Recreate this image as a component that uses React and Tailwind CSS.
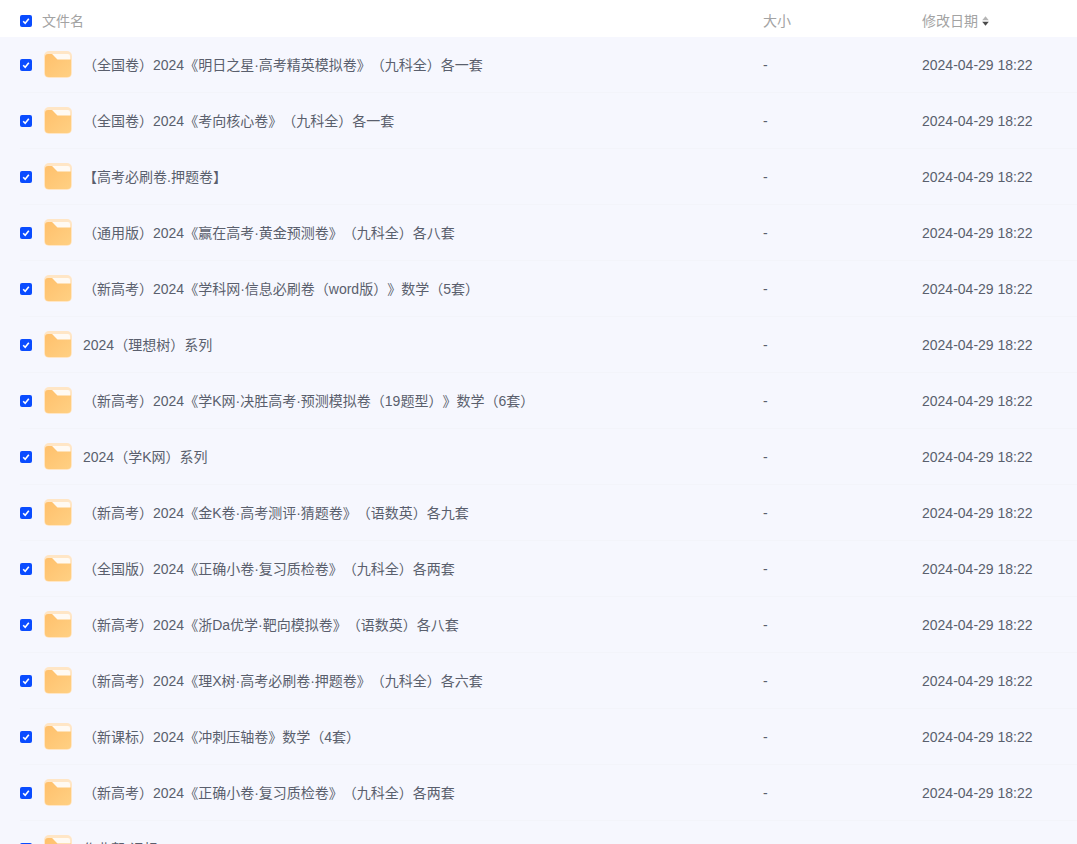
const ROWS = [
  '（全国卷）2024《明日之星·高考精英模拟卷》（九科全）各一套',
  '（全国卷）2024《考向核心卷》（九科全）各一套',
  '【高考必刷卷.押题卷】',
  '（通用版）2024《赢在高考·黄金预测卷》（九科全）各八套',
  '（新高考）2024《学科网·信息必刷卷（word版）》数学（5套）',
  '2024（理想树）系列',
  '（新高考）2024《学K网·决胜高考·预测模拟卷（19题型）》数学（6套）',
  '2024（学K网）系列',
  '（新高考）2024《金K卷·高考测评·猜题卷》（语数英）各九套',
  '（全国版）2024《正确小卷·复习质检卷》（九科全）各两套',
  '（新高考）2024《浙Da优学·靶向模拟卷》（语数英）各八套',
  '（新高考）2024《理X树·高考必刷卷·押题卷》（九科全）各六套',
  '（新课标）2024《冲刺压轴卷》数学（4套）',
  '（新高考）2024《正确小卷·复习质检卷》（九科全）各两套',
  '作业帮·课标'
];

const Checkbox = () => (
  <span className="flex h-3 w-3 shrink-0 items-center justify-center rounded-[2px] bg-[#0a4cff]">
    <svg width="8" height="8" viewBox="0 0 8 8" fill="none">
      <path d="M1.2 4.2 3.2 6.2 6.8 1.8" stroke="#fff" strokeWidth="1.6" />
    </svg>
  </span>
);

const FolderIcon = ({ id }) => (
  <svg width="28" height="28" viewBox="0 0 28 28" className="shrink-0">
    <defs>
      <linearGradient id={id} x1="0" y1="0" x2="1" y2="1">
        <stop offset="0" stopColor="#ffc06c" />
        <stop offset="1" stopColor="#ffd083" />
      </linearGradient>
    </defs>
    <rect x="0" y="0" width="28" height="27" rx="5" fill="#ffe6c6" />
    <path d="M8 3h16a2 2 0 0 1 2 2v4H13z" fill="#fffaf3" />
    <path d="M1 6a3 3 0 0 1 3-3h4l5.500 5.500H27V22.500a3.500 3.500 0 0 1-3.500 3.500h-19A3.500 3.500 0 0 1 1 22.500z" fill={`url(#${id})`} />
  </svg>
);

const Row = ({ name, id }) => (
  <div className="flex h-14 shrink-0 items-center pl-5">
    <div className="flex h-full flex-1 items-center border-b border-[#f3f4fa]">
      <Checkbox />
      <div className="ml-3">
        <FolderIcon id={id} />
      </div>
      <span className="ml-[11px] w-[680px] whitespace-nowrap">{name}</span>
      <span className="w-[159px]">-</span>
      <span className="whitespace-nowrap">2024-04-29 18:22</span>
    </div>
  </div>
);

const App = () => {
  return (
    <div className="flex h-[844px] w-[1077px] flex-col overflow-hidden bg-[#f6f7fe] font-['Liberation_Sans','Noto_Sans_CJK_SC',sans-serif] text-sm text-[#5a5f6d] [text-spacing-trim:space-all]">
      <div className="flex h-[37px] shrink-0 items-center bg-white pl-5 pt-1 text-[#a3a3a3]">
        <Checkbox />
        <span className="ml-[10px] w-[721px]">文件名</span>
        <span className="w-[159px]">大小</span>
        <span>修改日期</span>
        <svg width="7" height="10" viewBox="0 0 7 10" className="ml-1">
          <path d="M3.5 0.300 6.800 4.300H0.200z" fill="#b5b5b5" />
          <path d="M3.5 9.700 0.200 5.700H6.800z" fill="#4a4a4a" />
        </svg>
      </div>
      {ROWS.map((name, i) => (
        <Row key={i} name={name} id={`folder-fill-${i}`} />
      ))}
    </div>
  );
};

export default App;
